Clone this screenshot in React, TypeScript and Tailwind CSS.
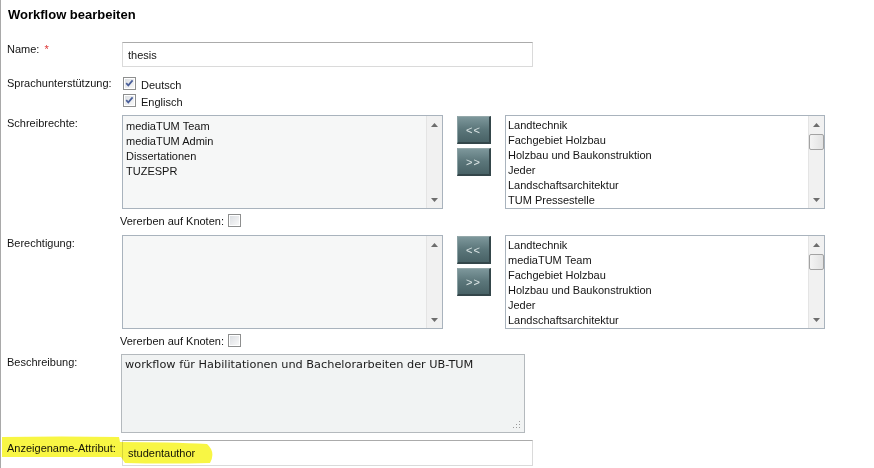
import React from "react";

const Check = ({ checked }: { checked: boolean }) => (
  <svg width="13" height="13" viewBox="0 0 13 13" className="block shrink-0">
    <defs>
      <linearGradient id={checked ? "cbg1" : "cbg2"} x1="0" y1="0" x2="1" y2="1">
        <stop offset="0" stopColor="#dcdfe3" />
        <stop offset="1" stopColor="#f8f8f8" />
      </linearGradient>
    </defs>
    <rect x="0.5" y="0.5" width="12" height="12" fill="#ffffff" stroke="#8e8f8f" />
    <rect x="2" y="2" width="9" height="9" fill={checked ? "url(#cbg1)" : "url(#cbg2)"} />
    {checked && (
      <path d="M3.2 6.2 L5.3 8.4 L9.6 3.4" fill="none" stroke="#4a5f9a" strokeWidth="1.7" />
    )}
  </svg>
);

const Tri = ({ up }: { up: boolean }) => (
  <svg width="7" height="4" viewBox="0 0 7 4" className="block">
    {up ? <path d="M3.5 0 L7 4 L0 4 Z" fill="#6d6d6d" /> : <path d="M0 0 L7 0 L3.5 4 Z" fill="#6d6d6d" />}
  </svg>
);

const ListBox = ({
  items,
  cls,
  thumb,
  pad,
}: {
  items: string[];
  cls: string;
  thumb: boolean;
  pad: string;
}) => (
  <div className={cls}>
    <div className={pad}>
      {items.map((i) => (
        <div key={i} className="h-[15px] whitespace-nowrap">
          {i}
        </div>
      ))}
    </div>
    <div className="w-[16px] h-full bg-[#f1f1f1] border-l border-[#e4e4e4] flex flex-col items-center shrink-0">
      <div className="h-[17px] flex items-center justify-center">
        <Tri up />
      </div>
      {thumb && (
        <div className="w-[15px] h-[16px] mt-[1px] rounded-[2px] border border-[#a3a3a3] bg-gradient-to-r from-[#f4f4f4] to-[#e2e2e2]" />
      )}
      <div className="flex-1" />
      <div className="h-[17px] flex items-center justify-center">
        <Tri up={false} />
      </div>
    </div>
  </div>
);

const Btn = ({ t }: { t: string }) => (
  <div className="w-[34px] h-[28px] flex items-center justify-center text-[11px] text-[#dde6e6] bg-gradient-to-b from-[#7d979b] via-[#5b767a] to-[#486266] border-t border-l border-t-[#94a8aa] border-l-[#8aa0a3] border-r-2 border-b-2 border-r-[#34464a] border-b-[#34464a] tracking-[1px]">
    {t}
  </div>
);

const Transfer = ({ left, right }: { left: string[]; right: string[] }) => (
  <div className="flex">
    <ListBox
      items={left}
      cls="w-[321px] h-[94px] border border-[#a9b3bd] bg-[#f6f7f7] flex"
      pad="flex-1 pl-[3px] pt-[3px] leading-[15px] overflow-hidden"
      thumb={false}
    />
    <div className="ml-[14px] pt-[1px] flex flex-col gap-[4px]">
      <Btn t="<<" />
      <Btn t=">>" />
    </div>
    <ListBox
      items={right}
      cls="ml-[14px] w-[320px] h-[94px] border border-[#a9b3bd] bg-white flex"
      pad="flex-1 pl-[2px] pt-[2px] leading-[15px] overflow-hidden"
      thumb
    />
  </div>
);

const Label = ({ children, pt }: { children: React.ReactNode; pt: string }) => (
  <div className={`w-[121px] shrink-0 pl-[6px] ${pt}`}>{children}</div>
);

export default function App() {
  return (
    <div className="relative w-[874px] h-[468px] overflow-hidden bg-white border-l border-[#a9a9a9] text-[11px] leading-[14px] text-[#141414] font-['Liberation_Sans',Arial,sans-serif]">
      <div className="h-[23px] pt-[7px] pl-[7px] text-[13px] leading-[16px] font-bold text-black">
        Workflow bearbeiten
      </div>

      {/* Name */}
      <div className="mt-[19px] flex h-[25px]">
        <Label pt="pt-[0px]">
          Name: <span className="text-[#d33] ml-[2px]">*</span>
        </Label>
        <div className="w-[411px] h-[25px] border border-[#dadada] border-t-[#ababab] bg-white pl-[5px] flex items-center text-[11px]">
          thesis
        </div>
      </div>

      {/* Sprachunterstützung */}
      <div className="mt-[8px] flex">
        <Label pt="pt-[1px]">Sprachunterstützung:</Label>
        <div className="flex flex-col pl-[1px]">
          <div className="h-[17px] flex items-start pt-[2px] gap-[5px]">
            <Check checked />
            <span className="mt-[1px]">Deutsch</span>
          </div>
          <div className="h-[17px] flex items-start pt-[2px] gap-[5px]">
            <Check checked />
            <span className="mt-[1px]">Englisch</span>
          </div>
        </div>
      </div>

      {/* Schreibrechte */}
      <div className="mt-[6px] flex">
        <Label pt="pt-[1px]">Schreibrechte:</Label>
        <Transfer
          left={["mediaTUM Team", "mediaTUM Admin", "Dissertationen", "TUZESPR"]}
          right={[
            "Landtechnik",
            "Fachgebiet Holzbau",
            "Holzbau und Baukonstruktion",
            "Jeder",
            "Landschaftsarchitektur",
            "TUM Pressestelle",
          ]}
        />
      </div>

      <div className="mt-[3px] h-[17px] flex items-start pl-[119px] pt-[2px] gap-[4px]">
        <span>Vererben auf Knoten:</span>
        <Check checked={false} />
      </div>

      {/* Berechtigung */}
      <div className="mt-[6px] flex">
        <Label pt="pt-[1px]">Berechtigung:</Label>
        <Transfer
          left={[]}
          right={[
            "Landtechnik",
            "mediaTUM Team",
            "Fachgebiet Holzbau",
            "Holzbau und Baukonstruktion",
            "Jeder",
            "Landschaftsarchitektur",
          ]}
        />
      </div>

      <div className="mt-[3px] h-[17px] flex items-start pl-[119px] pt-[2px] gap-[4px]">
        <span>Vererben auf Knoten:</span>
        <Check checked={false} />
      </div>

      {/* Beschreibung */}
      <div className="mt-[5px] flex">
        <Label pt="pt-[1px]">Beschreibung:</Label>
        <div className="relative -ml-[1px] w-[404px] h-[79px] border border-[#b4b9bd] bg-[#f1f3f3] pl-[3px] pt-[2px] text-[11.3px] leading-[15px] font-['DejaVu_Sans',Verdana,sans-serif] text-[#1a1a1a]">
          workflow für Habilitationen und Bachelorarbeiten der UB-TUM
          <svg width="8" height="8" viewBox="0 0 8 8" className="absolute right-[3px] bottom-[3px]">
            <rect x="6" y="0" width="1" height="1" fill="#9a9a9a" />
            <rect x="3" y="3" width="1" height="1" fill="#9a9a9a" />
            <rect x="6" y="3" width="1" height="1" fill="#9a9a9a" />
            <rect x="0" y="6" width="1" height="1" fill="#9a9a9a" />
            <rect x="3" y="6" width="1" height="1" fill="#9a9a9a" />
            <rect x="6" y="6" width="1" height="1" fill="#9a9a9a" />
          </svg>
        </div>
      </div>

      {/* Anzeigename */}
      <div className="mt-[7px] flex h-[26px]">
        <Label pt="pt-[1px]">Anzeigename-Attribut:</Label>
        <div className="w-[411px] h-[26px] border border-[#dadada] border-t-[#ababab] bg-white pl-[5px] flex items-center">
          studentauthor
        </div>
      </div>

      {/* Highlighter marker */}
      <svg
        width="874"
        height="468"
        viewBox="0 0 874 468"
        className="absolute left-0 top-0 pointer-events-none mix-blend-multiply"
      >
        <path
          d="M1 437 Q60 436 118 437 L119 442 Q170 442 206 444 Q215 452 209 463 Q165 464 124 463 L120 457 Q60 457 1 457 Z"
          fill="#f8f53a"
          opacity="0.95"
        />
      </svg>
    </div>
  );
}
